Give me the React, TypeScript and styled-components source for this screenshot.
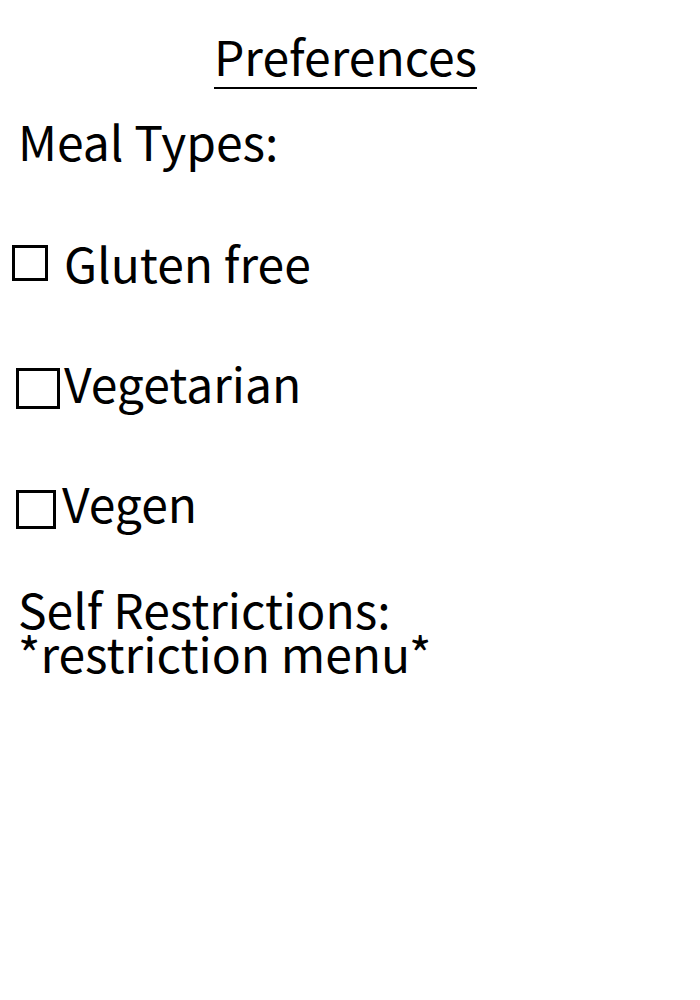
import React from 'react';
import styled, { createGlobalStyle } from 'styled-components';

const GlobalStyle = createGlobalStyle`
  body {
    margin: 0;
    background: #ffffff;
    color: #000000;
    font-family: "Noto Sans CJK JP", "Open Sans", sans-serif;
  }
`;

const Page = styled.div`
  width: 700px;
  min-height: 1000px;
  padding: 31px 0 0 18px;
  box-sizing: border-box;
`;

const Title = styled.h1`
  display: flex;
  justify-content: center;
  margin: 0 0 27px -18px;
  padding-right: 9px;
  font-size: 48px;
  font-weight: 400;
  line-height: 48px;
`;

const TitleText = styled.span`
  padding-bottom: 8px;
  border-bottom: 2px solid #000;
`;

const Label = styled.div`
  font-size: 48px;
  line-height: 48px;
`;

const OptionList = styled.div`
  display: flex;
  flex-direction: column;
  gap: 72px;
  margin-top: 74px;
`;

const Option = styled.label`
  display: flex;
  align-items: flex-end;
  height: 48px;
  font-size: 48px;
  line-height: 48px;
`;

// empty checkbox square; bottom margin sets it against the text (row bottom = baseline + 3px)
const Box = styled.span<{ $w: number; $h: number; $drop: number; $gap: number; $shift: number }>`
  display: inline-block;
  flex: none;
  width: ${(p) => p.$w}px;
  height: ${(p) => p.$h}px;
  border: 3px solid #000;
  box-sizing: border-box;
  margin: 0 ${(p) => p.$gap}px ${(p) => p.$drop}px ${(p) => p.$shift}px;
`;

const Restrictions = styled.div`
  margin-top: 60px;
  font-size: 48px;
  line-height: 44px;
`;

const options = [
  { name: 'Gluten free', w: 36, h: 36, drop: 5, gap: 16, shift: -6 },
  { name: 'Vegetarian', w: 44, h: 41, drop: -3, gap: 4, shift: -2 },
  { name: 'Vegen', w: 40, h: 39, drop: -3, gap: 6, shift: -2 },
];

export default function App() {
  return (
    <Page>
      <GlobalStyle />
      <Title>
        <TitleText>Preferences</TitleText>
      </Title>
      <Label>Meal Types:</Label>
      <OptionList>
        {options.map((o) => (
          <Option key={o.name}>
            <Box $w={o.w} $h={o.h} $drop={o.drop} $gap={o.gap} $shift={o.shift} />
            {o.name}
          </Option>
        ))}
      </OptionList>
      <Restrictions>
        <div>Self Restrictions:</div>
        <div>*restriction menu*</div>
      </Restrictions>
    </Page>
  );
}
